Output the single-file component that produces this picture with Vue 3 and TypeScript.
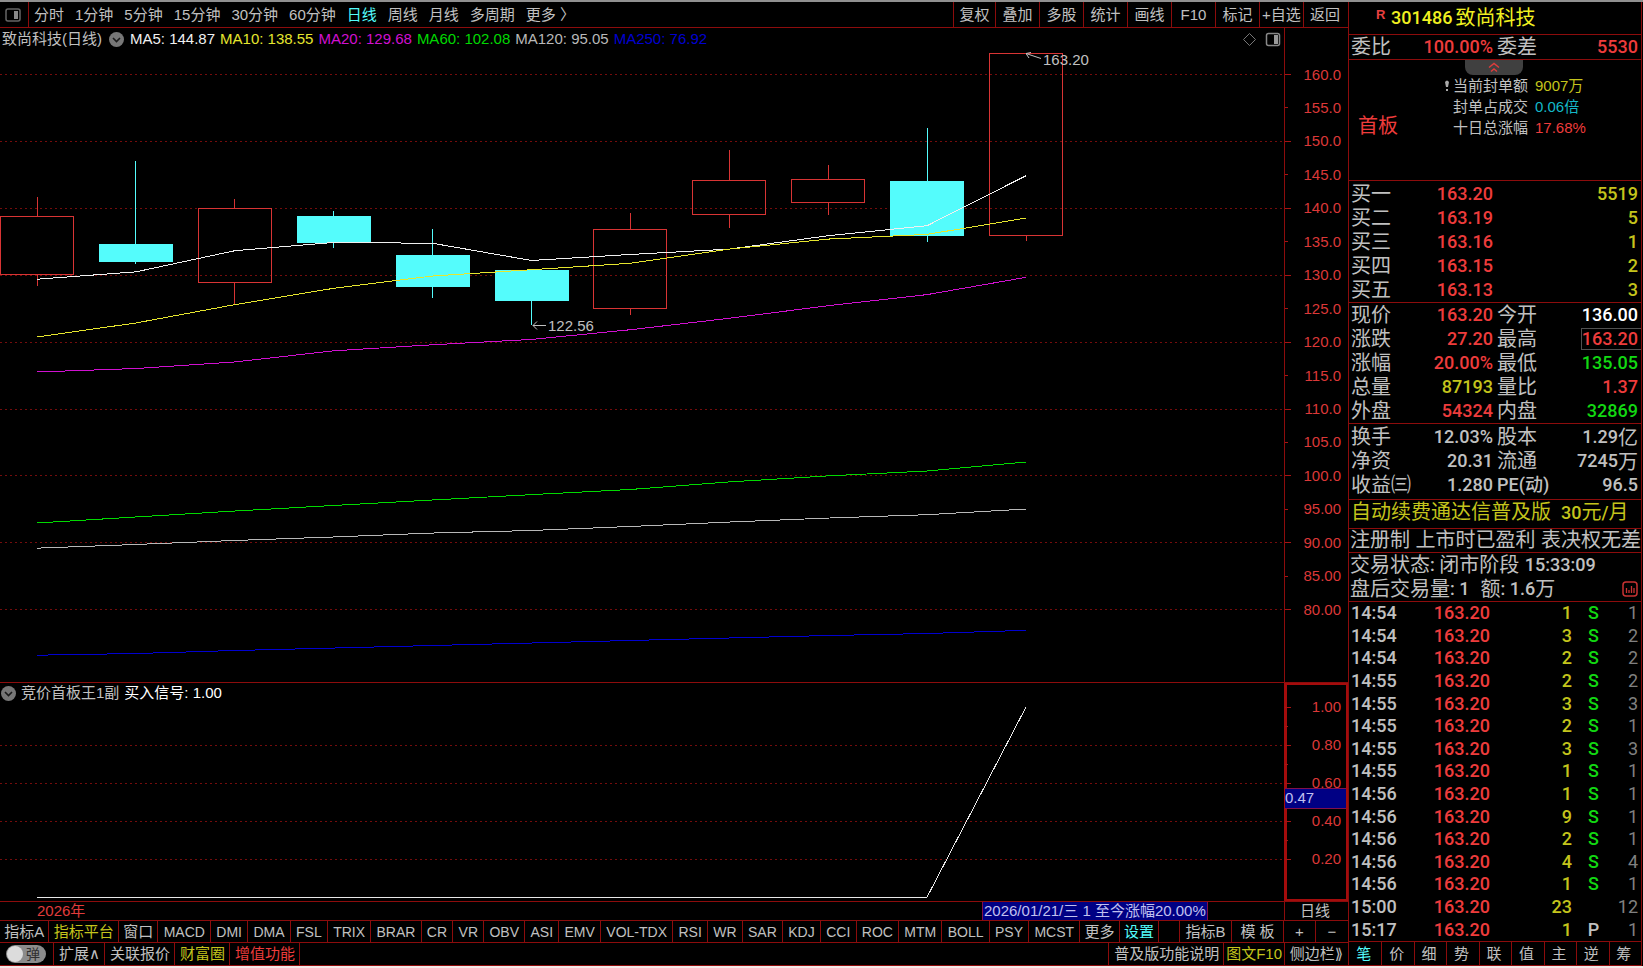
<script setup lang="ts">
interface Candle { top: number; bottom: number; high: number; low: number; up: boolean }
interface Average { name: string; value: string; color: string; points: number[] }
interface Tab { text: string; tone?: string; cjk?: boolean }

const periods = ['分时', '1分钟', '5分钟', '15分钟', '30分钟', '60分钟', '日线', '周线', '月线', '多周期', '更多 〉']
const tools = ['复权', '叠加', '多股', '统计', '画线', 'F10', '标记', '+自选', '返回']

const candles: Candle[] = [
  { top: 138.7, bottom: 130.07, high: 141.7, low: 128.35, up: true },
  { top: 134.66, bottom: 132, high: 147, low: 131.7, up: false },
  { top: 140, bottom: 128.94, high: 141.4, low: 125.5, up: true },
  { top: 138.8, bottom: 134.86, high: 139.55, low: 134.1, up: false },
  { top: 132.97, bottom: 128.34, high: 136.9, low: 126.64, up: false },
  { top: 130.7, bottom: 126.25, high: 130.7, low: 122.56, up: false },
  { top: 136.86, bottom: 125.05, high: 139.3, low: 124.05, up: true },
  { top: 144.13, bottom: 139.1, high: 148.67, low: 137.1, up: true },
  { top: 144.33, bottom: 140.9, high: 146.43, low: 139, up: true },
  { top: 144.03, bottom: 135.96, high: 152.05, low: 135, up: false },
  { top: 163.2, bottom: 136, high: 163.2, low: 135.05, up: true },
]

const averages: Average[] = [
  { name: 'MA5', value: '144.87', color: '#f0f0f0', points: [129.4, 130.5, 133.66, 134.9, 134.77, 132.2, 133.1, 133.9, 135.9, 137.4, 144.87] },
  { name: 'MA10', value: '138.55', color: '#e6e62e', points: [120.76, 122.86, 125.6, 128.04, 129.88, 130.82, 131.78, 133.9, 135.4, 136.1, 138.55] },
  { name: 'MA20', value: '129.68', color: '#d010d0', points: [115.53, 116.05, 117.03, 118.7, 119.6, 120.4, 121.85, 123.56, 125.44, 127.1, 129.68] },
  { name: 'MA60', value: '102.08', color: '#00d800', points: [92.96, 93.86, 94.75, 95.58, 96.4, 97.2, 97.97, 99.1, 100, 100.73, 102.08] },
  { name: 'MA120', value: '95.05', color: '#b8b8b8', points: [89.2, 89.75, 90.35, 90.87, 91.46, 91.84, 92.44, 93.1, 93.7, 94.2, 95.05] },
  { name: 'MA250', value: '76.92', color: '#0000d0', points: [73.2, 73.45, 73.9, 74.27, 74.65, 75.02, 75.4, 75.77, 76.14, 76.44, 76.92] },
]

const PLOT_W = 1284
const MAIN_H = 654
const SUB_H = 218
const candleX = (i: number) => 37 + i * 98.9
const priceY = (p: number) => 46.5 + (160 - p) * 6.69
const signalY = (v: number) => 214 - v * 190
const linePoints = (points: number[]) => points.map((p, i) => `${candleX(i)},${priceY(p)}`).join(' ')

const priceTicks = Array.from({ length: 17 }, (_, i) => 160 - i * 5)
const priceGrid = priceTicks.filter((p) => p % 10 === 0)
const priceLabel = (p: number) => p.toFixed(p >= 100 ? 1 : 2)
const signalTicks = [1, 0.8, 0.6, 0.4, 0.2]
const signalMinor = [0.9, 0.7, 0.5, 0.3]
const signal = [0, 0, 0, 0, 0, 0, 0, 0, 0, 0, 1]
const signalPoints = signal.map((v, i) => `${candleX(i)},${signalY(v)}`).join(' ')
const pct = (v: number, total: number) => `${(v / total) * 100}%`

const indicators: Tab[] = [
  { text: '指标A', cjk: true }, { text: '指标平台', tone: 'gold', cjk: true }, { text: '窗口', cjk: true },
  ...'MACD DMI DMA FSL TRIX BRAR CR VR OBV ASI EMV VOL-TDX RSI WR SAR KDJ CCI ROC MTM BOLL PSY MCST'.split(' ').map((text) => ({ text })),
  { text: '更多', cjk: true }, { text: '设置', tone: 'cyan', cjk: true },
]
const footer: Tab[] = [
  { text: '扩展∧' }, { text: '关联报价' }, { text: '财富圈', tone: 'gold' }, { text: '增值功能', tone: 'red' },
]

const bids = [
  ['买一', '163.20', '5519'], ['买二', '163.19', '5'], ['买三', '163.16', '1'], ['买四', '163.15', '2'], ['买五', '163.13', '3'],
]
const quotes = [
  ['现价', '163.20', 'red', '今开', '136.00', 'white'],
  ['涨跌', '27.20', 'red', '最高', '163.20', 'red boxed'],
  ['涨幅', '20.00%', 'red', '最低', '135.05', 'green'],
  ['总量', '87193', 'gold', '量比', '1.37', 'red'],
  ['外盘', '54324', 'red', '内盘', '32869', 'green'],
]
const facts = [
  ['换手', '12.03%', '股本', '1.29', '亿'],
  ['净资', '20.31', '流通', '7245', '万'],
  ['收益㈢', '1.280', 'PE(动)', '96.5', ''],
]
const sealing = [
  ['当前封单额', '9007万', 'gold'], ['封单占成交', '0.06倍', 'teal'], ['十日总涨幅', '17.68%', 'red'],
]
const trades = [
  ['14:54', '1', 'S', '1'], ['14:54', '3', 'S', '2'], ['14:54', '2', 'S', '2'], ['14:55', '2', 'S', '2'], ['14:55', '3', 'S', '3'],
  ['14:55', '2', 'S', '1'], ['14:55', '3', 'S', '3'], ['14:55', '1', 'S', '1'], ['14:56', '1', 'S', '1'], ['14:56', '9', 'S', '1'],
  ['14:56', '2', 'S', '1'], ['14:56', '4', 'S', '4'], ['14:56', '1', 'S', '1'], ['15:00', '23', '', '12'], ['15:17', '1', 'P', '1'],
]
const views = ['笔', '价', '细', '势', '联', '值', '主', '逆', '筹']
</script>

<template>
  <div class="app">
    <main class="left">
      <nav class="toolbar">
        <button class="layout" aria-label="布局">
          <svg width="16" height="14" viewBox="0 0 16 14"><rect x="1" y="1" width="14" height="12" rx="2" fill="none" stroke="#666" stroke-width="1.5" /><rect x="9" y="3" width="4" height="8" fill="#888" /></svg>
        </button>
        <div class="periods">
          <button v-for="p in periods" :key="p" :class="{ cyan: p === '日线' }">{{ p }}</button>
        </div>
        <div class="tools"><button v-for="t in tools" :key="t">{{ t }}</button></div>
      </nav>

      <section class="chart">
        <div class="plot">
          <svg class="drawing" :viewBox="`0 0 ${PLOT_W} ${MAIN_H}`" preserveAspectRatio="none">
            <line v-for="p in priceGrid" :key="p" class="grid" x1="0" :x2="PLOT_W" :y1="priceY(p)" :y2="priceY(p)" />
            <g v-for="(c, i) in candles" :key="i" :class="c.up ? 'rise' : 'fall'">
              <line :x1="candleX(i)" :x2="candleX(i)" :y1="priceY(c.high)" :y2="priceY(c.top)" />
              <line :x1="candleX(i)" :x2="candleX(i)" :y1="priceY(c.bottom)" :y2="priceY(c.low)" />
              <rect :x="candleX(i) - 36.5" :y="priceY(c.top)" width="73" :height="priceY(c.bottom) - priceY(c.top)" />
            </g>
            <polyline v-for="a in averages" :key="a.name" class="curve" :points="linePoints(a.points)" :stroke="a.color" />
          </svg>
          <div class="legend">
            <span>致尚科技(日线)</span>
            <button class="drop" aria-label="展开"><svg width="15" height="15" viewBox="0 0 15 15"><circle cx="7.5" cy="7.5" r="7.5" fill="#777" /><path d="M4 6l3.500 3.500L11 6" fill="none" stroke="#1a1a1a" stroke-width="1.600" /></svg></button>
            <span v-for="a in averages" :key="a.name" :style="{ color: a.color }">{{ a.name }}: {{ a.value }}</span>
            <svg class="corner" width="39" height="15" viewBox="0 0 39 15"><path d="M7.500 1.500L13.500 7.500L7.500 13.500L1.500 7.500Z" fill="none" stroke="#777" /><rect x="24.500" y="1.500" width="13" height="12" rx="2" fill="none" stroke="#888" stroke-width="1.500" /><rect x="32" y="3" width="4" height="9" fill="#999" /></svg>
          </div>
          <div class="mark" :style="{ left: pct(532, PLOT_W), top: pct(289, MAIN_H) }">
            <svg width="16" height="18" viewBox="0 0 16 18"><path d="M1 8.500H14M5 4.500L1 8.500L5 12.500" /></svg><span>122.56</span>
          </div>
          <div class="mark" :style="{ left: pct(1026, PLOT_W), top: pct(23, MAIN_H) }">
            <svg width="17" height="18" viewBox="0 0 17 18"><path d="M0 2.500L15 7.500M5 1.500L0 2.500L3 7" /></svg><span>163.20</span>
          </div>
        </div>
        <div class="axis">
          <svg class="drawing ticks" :viewBox="`0 0 63 ${MAIN_H}`" preserveAspectRatio="none">
            <line v-for="p in priceTicks" :key="p" x1="0" :x2="p % 10 === 0 ? 6 : 3" :y1="priceY(p)" :y2="priceY(p)" />
          </svg>
          <span v-for="p in priceTicks" :key="p" class="scale" :style="{ top: pct(priceY(p), MAIN_H) }">{{ priceLabel(p) }}</span>
        </div>
      </section>

      <section class="chart">
        <div class="plot">
          <svg class="drawing" :viewBox="`0 0 ${PLOT_W} ${SUB_H}`" preserveAspectRatio="none">
            <line v-for="v in signalTicks.slice(1)" :key="v" class="grid" x1="0" :x2="PLOT_W" :y1="signalY(v)" :y2="signalY(v)" />
            <polyline class="curve" :points="signalPoints" stroke="#e8e8e8" />
          </svg>
          <div class="legend sub">
            <button class="drop" aria-label="展开"><svg width="15" height="15" viewBox="0 0 15 15"><circle cx="7.5" cy="7.5" r="7.5" fill="#777" /><path d="M4 6l3.500 3.500L11 6" fill="none" stroke="#1a1a1a" stroke-width="1.600" /></svg></button>
            <span>竞价首板王1副</span><span class="white">买入信号: 1.00</span>
          </div>
        </div>
        <div class="axis active">
          <svg class="drawing ticks" :viewBox="`0 0 63 ${SUB_H}`" preserveAspectRatio="none">
            <line v-for="v in signalTicks" :key="v" x1="0" x2="6" :y1="signalY(v)" :y2="signalY(v)" />
            <line v-for="v in signalMinor" :key="v" x1="0" x2="3" :y1="signalY(v)" :y2="signalY(v)" />
          </svg>
          <span v-for="v in signalTicks" :key="v" class="scale" :style="{ top: pct(signalY(v), SUB_H) }">{{ v.toFixed(2) }}</span>
          <span class="cursor" :style="{ top: pct(105, SUB_H) }">0.47</span>
        </div>
      </section>

      <div class="dates">
        <div class="timeline">
          <span class="year">2026年</span>
          <span class="stamp" :style="{ left: pct(982, PLOT_W) }">2026/01/21/三 1 至今涨幅20.00%</span>
        </div>
        <div class="period">日线</div>
      </div>

      <nav class="indicators">
        <div class="tabs"><button v-for="t in indicators" :key="t.text" :class="[t.tone, { cjk: t.cjk }]">{{ t.text }}</button></div>
        <span class="spacer"></span>
        <button class="wide cjk">指标B</button>
        <button class="wide cjk">模 板</button>
        <button class="step cjk">+</button>
        <button class="step cjk">−</button>
      </nav>

      <nav class="footer">
        <div class="switch-cell">
          <button class="switch" role="switch" aria-checked="false"><i></i>弹</button>
        </div>
        <button v-for="t in footer" :key="t.text" :class="t.tone">{{ t.text }}</button>
        <span class="spacer"></span>
        <button>普及版功能说明</button>
        <button class="gold guide">图文F10</button>
        <button class="side">侧边栏⟫</button>
      </nav>
    </main>

    <aside class="panel">
      <h1><sup>R</sup><b>301486</b><span>致尚科技</span></h1>
      <div class="group single">
        <div class="pair"><span>委比</span><b class="red">100.00%</b><span class="second">委差</span><b class="red">5530</b></div>
      </div>
      <div class="seal">
        <button class="fold" aria-label="收起"><svg width="12" height="11" viewBox="0 0 12 11"><path d="M1 5.500L6 1.500L11 5.500M3 9.500L6 7L9 9.500" fill="none" stroke="#e03c3c" stroke-width="1.400" /></svg></button>
        <strong class="red">首板</strong>
        <svg class="note" width="4" height="11" viewBox="0 0 4 11"><path d="M0 2Q2-1 4 2L3 7H1ZM1 9H3V11H1Z" fill="#aaa" /></svg>
        <dl>
          <template v-for="s in sealing" :key="s[0]"><dt>{{ s[0] }}</dt><dd :class="s[2]">{{ s[1] }}</dd></template>
        </dl>
      </div>
      <div class="group bids">
        <div v-for="b in bids" :key="b[0]" class="pair"><span>{{ b[0] }}</span><b class="red">{{ b[1] }}</b><span></span><b class="gold">{{ b[2] }}</b></div>
      </div>
      <div class="group">
        <div v-for="q in quotes" :key="q[0]" class="pair"><span>{{ q[0] }}</span><b :class="q[2]">{{ q[1] }}</b><span class="second">{{ q[3] }}</span><b :class="q[5]">{{ q[4] }}</b></div>
      </div>
      <div class="group facts">
        <div v-for="f in facts" :key="f[0]" class="pair"><span>{{ f[0] }}</span><b>{{ f[1] }}</b><span class="second" :class="{ ratio: !f[4] }">{{ f[2] }}</span><b>{{ f[3] }}<em v-if="f[4]">{{ f[4] }}</em></b></div>
      </div>
      <a class="promo gold" href="#">自动续费通达信普及版<span><b>30</b>元<b>/</b>月</span></a>
      <div class="traits">注册制 上市时已盈利 表决权无差</div>
      <div class="status">
        <div>交易状态<b>: </b>闭市阶段 <b>15:33:09</b></div>
        <div>盘后交易量<b>: 1</b>&nbsp; 额<b>: 1.6</b>万
          <svg width="16" height="16" viewBox="0 0 16 16"><rect x="1" y="1" width="14" height="14" rx="3" fill="none" stroke="#c83232" stroke-width="1.500" /><path d="M4.500 7V12M7 9V12M9.500 5V12M12 7V12" stroke="#c83232" stroke-width="1.300" /></svg>
        </div>
      </div>
      <div class="trades">
        <table>
          <colgroup><col class="c-time" /><col class="c-price" /><col class="c-vol" /><col class="c-side" /><col /></colgroup>
          <tbody>
            <tr v-for="(t, i) in trades" :key="i">
              <td>{{ t[0] }}</td><td class="red num">163.20</td><td class="gold num">{{ t[1] }}</td>
              <td class="mid" :class="{ green: t[2] === 'S' }">{{ t[2] }}</td><td class="count num">{{ t[3] }}</td>
            </tr>
          </tbody>
        </table>
      </div>
      <nav class="views"><button v-for="v in views" :key="v" :class="{ cyan: v === '笔' }">{{ v }}</button></nav>
    </aside>
  </div>
</template>

<style>
html, body { margin: 0; background: #000; }
</style>

<style scoped>
.app {
  --line: #8c0c0c;
  box-sizing: border-box;
  display: grid;
  grid-template-columns: minmax(0, 1fr) 294px;
  min-height: 100vh;
  padding-right: 1px;
  border-top: 2px solid #909090;
  border-bottom: 2px solid #f4e8e8;
  background: #000;
  color: #c0c0c0;
  font: 15px/18px "Liberation Sans", "Noto Sans CJK SC", sans-serif;
  white-space: nowrap;
}
.app *, .app *::before { box-sizing: border-box; }
button { margin: 0; padding: 0; border: 0; background: none; color: inherit; font: inherit; white-space: nowrap; cursor: pointer; }
.red { color: #ee3c3c; }
.gold { color: #c4c41c; }
.green { color: #12d812; }
.teal { color: #14b8c8; }
.white { color: #fff; }
.cyan { color: #54fcfc; }

.left { display: grid; grid-template-rows: 26px 655fr 219fr 19px 22px 23px; min-width: 0; }
.left > * { min-width: 0; border-bottom: 1px solid var(--line); }

.toolbar { display: flex; }
.layout { display: grid; place-items: center; width: 29px; padding-right: 3px; border-right: 1px solid var(--line); }
.periods { display: flex; gap: 11px; padding-left: 5px; }
.tools { display: flex; margin-left: auto; }
.tools button { width: 44px; border-left: 1px solid var(--line); }
.tools button:first-child { width: 42px; }
.tools button:last-child { width: 45px; padding-right: 2px; }

.chart { display: grid; grid-template-columns: minmax(0, 1fr) 64px; }
.plot, .axis { position: relative; min-width: 0; min-height: 0; }
.axis { border-left: 1px solid var(--line); }
.active { border-color: #a40c0c; box-shadow: inset 0 0 0 2px #a40c0c; }
.drawing { position: absolute; inset: 0; width: 100%; height: 100%; shape-rendering: crispEdges; }
.grid { stroke: #740c0c; stroke-dasharray: 2 3; }
.ticks line { stroke: #a81414; }
.rise line, .rise rect { stroke: #d83434; fill: #000; fill-opacity: 0; }
.fall line, .fall rect { stroke: #54fcfc; fill: #54fcfc; }
.curve { fill: none; }
.legend { position: relative; display: flex; align-items: center; gap: 5px; height: 22px; padding-left: 2px; }
.sub { height: 20px; padding-left: 1px; }
.drop { display: flex; margin: 0 1px 0 2px; }
.sub .drop { margin: 0; }
.corner { margin-left: auto; margin-right: 3px; }
.mark { position: absolute; display: flex; height: 18px; }
.mark path { fill: none; stroke: #c0c0c0; }
.scale { position: absolute; right: 7px; color: #dc3838; transform: translateY(-50%); }
.cursor { position: absolute; left: 0; right: 2px; height: 21px; border: 1px solid #80104c; border-width: 1px 0; background: #000084; color: #c0c0f0; }

.dates { display: grid; grid-template-columns: minmax(0, 1fr) 64px; }
.timeline { position: relative; padding-left: 37px; }
.year { color: #e03c3c; }
.stamp { position: absolute; top: 0; bottom: 0; padding: 0 1px; border: 1px solid #80104c; border-width: 0 1px; background: #000084; color: #c0c0f0; }
.period { padding-right: 3px; border-left: 1px solid var(--line); text-align: center; }

.indicators, .footer { display: flex; }
.tabs { display: flex; width: 86%; }
.indicators button { padding: 0 5px; border-right: 1px solid var(--line); font-size: 14px; }
.indicators .tabs button { flex: 1 0 auto; }
.indicators .cjk { padding: 0 4px; font-size: 15px; }
.spacer { flex: 1; border-right: 1px solid var(--line); }
.indicators .wide { width: 52px; }
.indicators .step { width: 32px; }
.indicators > button:last-child, .footer button:last-child { border-right: 0; }
.footer { font-family: "Liberation Sans", "DejaVu Sans", "Noto Sans CJK SC", sans-serif; }
.footer button { padding: 0 4px 0 5px; border-right: 1px solid var(--line); }
.footer .guide { padding: 0 2px; }
.footer .side { width: 63px; padding: 0; }
.switch-cell { display: flex; align-items: center; width: 54px; padding-left: 6px; border-right: 1px solid var(--line); }
.footer .switch { display: flex; align-items: center; gap: 3px; width: 40px; height: 18px; padding: 0 1px; border: 0; border-radius: 9px; background: #8c8c8c; color: #303030; font-size: 14px; }
.switch i { width: 16px; height: 16px; border-radius: 8px; background: #dcdcdc; }

.panel { display: flex; flex-direction: column; min-width: 0; border: 1px solid var(--line); border-width: 0 1px; font-size: 20px; line-height: 24px; }
.panel > * { flex: none; border-bottom: 1px solid var(--line); }
.panel b, .trades, .ratio { font-family: Roboto, "Liberation Sans", "Noto Sans CJK SC", sans-serif; font-size: 18px; font-weight: 500; }
h1 { display: flex; align-items: center; height: 33px; margin: 0; padding-left: 27px; color: #f0f020; font-size: 20px; font-weight: 400; }
h1 sup { width: 15px; height: 26px; color: #e84040; font-size: 13px; font-weight: 700; line-height: 20px; }
h1 span { margin-left: 3px; }
.bids { padding-top: 1px; }
.facts { padding: 1px 0 2px; }
.pair { display: grid; grid-template-columns: 62px 82px 66px 1fr; height: 24px; padding-left: 2px; }
.pair b { display: flex; justify-self: end; }
.pair b:nth-child(2) { padding-right: 2px; }
.pair b:last-child { padding-right: 3px; }
.pair .second { padding-left: 2px; }
.pair .boxed { height: 22px; margin-top: 1px; border: 1px solid #505050; border-right: 0; line-height: 20px; }
.pair em { font-family: "Noto Sans CJK SC", sans-serif; font-size: 20px; font-style: normal; font-weight: 400; }
.seal { display: grid; grid-template-columns: 94px 10px 1fr; align-content: start; height: 121px; font-size: 15px; line-height: 21px; }
.fold { grid-column: 1 / -1; justify-self: center; display: grid; place-items: center; width: 58px; height: 15px; margin-right: 2px; border-radius: 0 0 8px 8px; background: #404040; }
.seal strong { align-self: center; padding-left: 9px; padding-top: 40px; font-size: 20px; font-weight: 400; }
.note { margin: 5px 0 0 2px; }
dl { display: grid; grid-template-columns: 82px 1fr; margin: 0; }
dt, dd { margin: 0; }
.promo { display: flex; height: 29px; padding-left: 2px; text-decoration: none; }
.promo span { margin-left: 10px; }
.traits { height: 24px; padding-left: 1px; overflow: hidden; line-height: 22px; }
.status { padding-left: 1px; }
.status div { display: flex; align-items: center; height: 24px; white-space: pre; }
.status svg { margin-left: auto; margin-right: 3px; }
.panel .trades { flex: 1; }
table { width: 100%; height: 100%; table-layout: fixed; border-collapse: collapse; line-height: 22px; }
td { padding: 0; }
td:first-child { padding-left: 2px; }
.c-time { width: 62px; }
.c-price { width: 79px; }
.c-vol { width: 82px; }
.c-side { width: 43px; }
.num { text-align: right; }
.mid { text-align: center; }
.count { padding-right: 3px; color: #808080; font-weight: 400; }
.views { display: grid; grid-template-columns: repeat(9, 1fr); height: 24px; font-size: 15px; line-height: 20px; }
.views button { padding-right: 3px; }
.views button + button { border-left: 1px solid var(--line); }
</style>
